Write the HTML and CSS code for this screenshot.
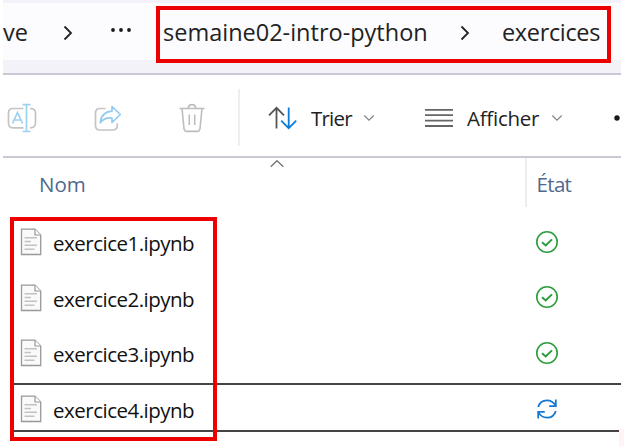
FILE: index.html
```
<!DOCTYPE html>
<html lang="fr">
<head>
<meta charset="utf-8">
<title>exercices</title>
<link rel="stylesheet" href="styles.css">
</head>
<body>
<svg class="defs" width="0" height="0">
  <symbol id="file" viewBox="0 0 22 28">
    <path d="M1.5 1.2H15L20.7 7V26.5H1.5Z" fill="#fafafa" stroke="#999" stroke-width="1.3"/>
    <path d="M15 1.2V7H20.7" fill="#fff" stroke="#999" stroke-width="1.2"/>
    <path d="M4.5 9.7H17M4.5 13.5H11M4.5 17.3H17M4.5 21.3H14.5" stroke="#c2c2c2" stroke-width="1.6"/>
  </symbol>
  <symbol id="ok" viewBox="0 0 24 24">
    <circle cx="12" cy="12" r="10.2" fill="none" stroke="#2a9d3c" stroke-width="1.6"/>
    <path d="M7 12.2L10.7 15.5L17 9.4" fill="none" stroke="#2a9d3c" stroke-width="2"/>
  </symbol>
  <symbol id="sync" viewBox="0 0 24 24">
    <path d="M3.2 10C4.5 5.5 8 3.3 12 3.3C15.5 3.3 18.5 5 20.7 8.6M20.8 2.5V9.2H14.2M20.8 14C19.5 18.5 16 20.7 12 20.7C8.5 20.7 5.5 19 3.3 15.4M3.2 21.5V14.8H9.8" fill="none" stroke="#1479d4" stroke-width="1.8"/>
  </symbol>
  <symbol id="down" viewBox="0 0 12 8">
    <path d="M1.3 1.5L6 6.2L10.7 1.5" fill="none" stroke="#858585" stroke-width="1.2"/>
  </symbol>
</svg>
<main class="window">
  <nav class="address">
    <div class="crumbs">
      <span class="crumb drive">ve</span>
      <svg class="sep first" width="10" height="16" viewBox="0 0 10 16"><path d="M1.5 1.5L8 8L1.5 14.5" fill="none" stroke="#222" stroke-width="1.8"/></svg>
      <svg class="dots" width="22" height="6" viewBox="0 0 22 6" fill="#1a1a1a"><circle cx="3" cy="3" r="1.9"/><circle cx="11" cy="3" r="1.9"/><circle cx="19" cy="3" r="1.9"/></svg>
      <span class="crumb folder">semaine02-intro-python</span>
      <svg class="sep second" width="10" height="16" viewBox="0 0 10 16"><path d="M1.5 1.5L8 8L1.5 14.5" fill="none" stroke="#222" stroke-width="1.8"/></svg>
      <span class="crumb current">exercices</span>
    </div>
  </nav>
  <div class="toolbar">
    <svg class="rename" width="30" height="30" viewBox="0 0 30 30" fill="none" stroke-width="1.7">
      <path d="M16.5 5.5H6Q1.5 5.5 1.5 10V20Q1.5 24.8 6 24.8H16.5M23 5.5Q28.5 5.5 28.5 10V20Q28.5 24.8 23 24.8" stroke="#c4c4c4"/>
      <path d="M5.5 20.5L10.5 9.5L15.5 20.5M7.2 17H13.8M19.5 1.8V28.5M15.5 1.7H23.5M15.5 28.5H23.5" stroke="#9ed0f2"/>
    </svg>
    <svg class="share" width="28" height="28" viewBox="0 0 28 28" fill="none" stroke-width="1.7" stroke-linejoin="round">
      <path d="M11.5 4.5H6Q1.5 4.5 1.5 9V21.5Q1.5 26 6 26H18.5Q23.3 26 23.3 21.5V19.5" stroke="#c4c4c4"/>
      <path d="M18 2.5L26.3 10.5L18 18.5V14Q10.5 13.2 6.3 18.8Q7.3 8 18 7.2Z" stroke="#93caf0"/>
    </svg>
    <svg class="trash" width="28" height="30" viewBox="0 0 28 30" fill="none" stroke="#bdbdbd" stroke-width="1.6">
      <path d="M1.5 5.5H26.5M10.3 5.2Q10.5 1.6 14 1.6T17.7 5.2M4 5.5L6 25.5Q6.3 28.4 9 28.4H19Q21.7 28.4 22 25.5L24 5.5M11.3 11.5V22M16.7 11.5V22"/>
    </svg>
    <span class="divider"></span>
    <svg class="sort" width="30" height="24" viewBox="0 0 30 24" fill="none" stroke-width="1.8">
      <path d="M8.5 22.5V2M1 9.3L8.5 1.8L16 9.3" stroke="#555"/>
      <path d="M20.7 1.5V22M13.2 14.7L20.7 22.2L28.2 14.7" stroke="#0c7cd8"/>
    </svg>
    <span class="label sort-label">Trier</span>
    <svg class="caret" width="12" height="8"><use href="#down"/></svg>
    <svg class="lines" width="28" height="20" viewBox="0 0 28 20"><path d="M0 1.8H28M0 7.2H28M0 12.6H28M0 18H28" stroke="#666" stroke-width="1.8"/></svg>
    <span class="label view-label">Afficher</span>
    <svg class="caret" width="12" height="8"><use href="#down"/></svg>
    <svg class="more" width="6" height="6"><circle cx="3" cy="3" r="2.7" fill="#1a1a1a"/></svg>
  </div>
  <div class="columns">
    <span class="col-name">Nom</span>
    <svg class="sort-up" width="16" height="9" viewBox="0 0 16 9"><path d="M1.7 7.8L8 1.7L14.3 7.8" fill="none" stroke="#777" stroke-width="1.4"/></svg>
    <span class="col-state">État</span>
  </div>
  <div class="files">
    <div class="row"><svg class="file" width="22" height="28"><use href="#file"/></svg><span class="name">exercice1.ipynb</span><svg class="state" width="24" height="24"><use href="#ok"/></svg></div>
    <div class="row"><svg class="file" width="22" height="28"><use href="#file"/></svg><span class="name">exercice2.ipynb</span><svg class="state" width="24" height="24"><use href="#ok"/></svg></div>
    <div class="row"><svg class="file" width="22" height="28"><use href="#file"/></svg><span class="name">exercice3.ipynb</span><svg class="state" width="24" height="24"><use href="#ok"/></svg></div>
    <div class="row focused"><svg class="file" width="22" height="28"><use href="#file"/></svg><span class="name">exercice4.ipynb</span><svg class="state" width="24" height="24"><use href="#sync"/></svg></div>
  </div>
  <div class="mark path-mark"></div>
  <div class="mark files-mark"></div>
  <div class="corner"></div>
</main>
</body>
</html>
```
FILE: styles.css
```
* { box-sizing: border-box; }
body {
  margin: 0;
  background: #fff;
  font-family: "Open Sans", "Noto Sans", sans-serif;
  color: #222;
}
svg { display: block; flex: none; }
.defs { position: absolute; }
.window {
  position: relative;
  width: 624px;
  height: 446px;
  padding: 0 3px;
  overflow: hidden;
}
.address {
  height: 75px;
  padding-top: 3px;
  background: #f2f2f8;
  border-bottom: 2px solid #c8c8d6;
}
.crumbs {
  display: flex;
  align-items: center;
  height: 57px;
  background: #fcfcfe;
}
.crumb {
  flex: none;
  font-size: 23.5px;
  line-height: 30px;
  white-space: nowrap;
}
.drive { width: 60px; }
.sep { margin-top: 3px; }
.dots { margin: -3px 0 0 37px; }
.folder { width: 297px; margin-left: 31px; }
.current { margin-left: 32px; letter-spacing: -0.35px; }
.toolbar {
  display: flex;
  align-items: center;
  height: 83px;
  padding-top: 4px;
  border-bottom: 2px solid #cbc9d4;
}
.toolbar > * { flex: none; }
.rename { margin-left: 4px; }
.share { margin-left: 57px; }
.trash { margin-left: 56px; }
.divider { width: 2px; height: 57px; margin-left: 32px; background: #eee; }
.sort { margin-left: 28px; }
.label { font-size: 20.5px; line-height: 28px; white-space: nowrap; }
.sort-label { width: 41px; margin: 1px 0 0 13px; letter-spacing: -0.8px; }
.caret { margin-left: 11px; }
.lines { margin-left: 50px; }
.view-label { width: 73px; margin: 1px 0 0 14px; letter-spacing: -0.25px; }
.more { margin-left: 51px; }
.columns {
  display: flex;
  height: 49px;
  font-size: 20.5px;
  line-height: 28px;
  color: #4f698e;
}
.col-name { width: 231px; padding: 12px 0 0 36px; }
.sort-up { margin: 1px 0 0 36px; }
.col-state {
  width: 97px;
  margin-left: 240px;
  padding: 12px 0 0 10px;
  border-left: 2px solid #ededed;
  letter-spacing: -0.7px;
}
.files { padding-top: 8px; }
.row {
  display: flex;
  align-items: center;
  height: 55.5px;
  padding-left: 17px;
}
.focused {
  height: 49px;
  margin: 1.5px 0 0 11px;
  padding: 4px 0 0 6px;
  border-top: 2px solid #444;
  border-bottom: 2px solid #444;
}
.file { margin-top: -1px; }
.name {
  width: 481.5px;
  margin: 1px 0 0 11px;
  font-size: 20.5px;
  line-height: 28px;
  letter-spacing: -0.5px;
  color: #111;
}
.state { margin-top: -2px; }
.mark { position: absolute; border: 4px solid #ec0000; }
.path-mark { left: 156px; top: 6px; width: 455px; height: 57px; }
.files-mark { left: 10px; top: 217px; width: 207px; height: 224px; }
.corner {
  position: absolute;
  right: 0;
  bottom: 0;
  width: 5px;
  height: 17px;
  background: #fff3f4;
}
```
